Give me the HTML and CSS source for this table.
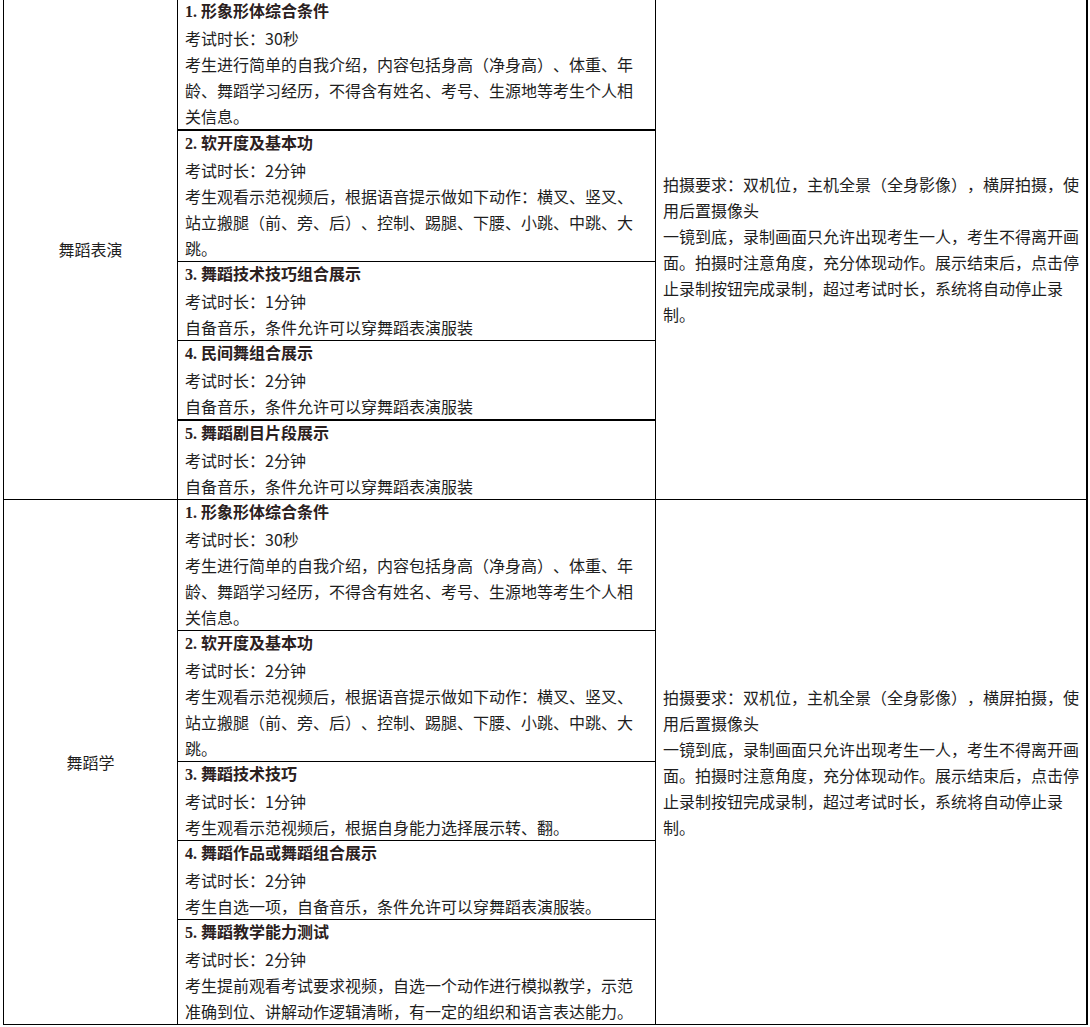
FILE: index.html
```html
<!DOCTYPE html>
<html lang="zh-CN">
<head>
<meta charset="utf-8">
<title>舞蹈考试要求</title>
<link rel="stylesheet" href="styles.css">
</head>
<body>
<table class="exam">
  <colgroup>
    <col class="c-name">
    <col class="c-items">
    <col class="c-req">
  </colgroup>
  <tbody>
    <tr class="first">
      <td class="name">舞蹈表演</td>
      <td class="items">
        <div class="item thick">
          <div class="title">1. 形象形体综合条件</div>
          <div>考试时长：30秒</div>
          <div>考生进行简单的自我介绍，内容包括身高（净身高）、体重、年龄、舞蹈学习经历，不得含有姓名、考号、生源地等考生个人相关信息。</div>
        </div>
        <div class="item">
          <div class="title">2. 软开度及基本功</div>
          <div>考试时长：2分钟</div>
          <div>考生观看示范视频后，根据语音提示做如下动作：横叉、竖叉、站立搬腿（前、旁、后）、控制、踢腿、下腰、小跳、中跳、大跳。</div>
        </div>
        <div class="item">
          <div class="title">3. 舞蹈技术技巧组合展示</div>
          <div>考试时长：1分钟</div>
          <div>自备音乐，条件允许可以穿舞蹈表演服装</div>
        </div>
        <div class="item thick">
          <div class="title">4. 民间舞组合展示</div>
          <div>考试时长：2分钟</div>
          <div>自备音乐，条件允许可以穿舞蹈表演服装</div>
        </div>
        <div class="item last">
          <div class="title">5. 舞蹈剧目片段展示</div>
          <div>考试时长：2分钟</div>
          <div>自备音乐，条件允许可以穿舞蹈表演服装</div>
        </div>
      </td>
      <td class="req">
        <div>拍摄要求：双机位，主机全景（全身影像），横屏拍摄，使用后置摄像头</div>
        <div>一镜到底，录制画面只允许出现考生一人，考生不得离开画面。拍摄时注意角度，充分体现动作。展示结束后，点击停止录制按钮完成录制，超过考试时长，系统将自动停止录制。</div>
      </td>
    </tr>
    <tr>
      <td class="name">舞蹈学</td>
      <td class="items">
        <div class="item">
          <div class="title">1. 形象形体综合条件</div>
          <div>考试时长：30秒</div>
          <div>考生进行简单的自我介绍，内容包括身高（净身高）、体重、年龄、舞蹈学习经历，不得含有姓名、考号、生源地等考生个人相关信息。</div>
        </div>
        <div class="item">
          <div class="title">2. 软开度及基本功</div>
          <div>考试时长：2分钟</div>
          <div>考生观看示范视频后，根据语音提示做如下动作：横叉、竖叉、站立搬腿（前、旁、后）、控制、踢腿、下腰、小跳、中跳、大跳。</div>
        </div>
        <div class="item">
          <div class="title">3. 舞蹈技术技巧</div>
          <div>考试时长：1分钟</div>
          <div>考生观看示范视频后，根据自身能力选择展示转、翻。</div>
        </div>
        <div class="item">
          <div class="title">4. 舞蹈作品或舞蹈组合展示</div>
          <div>考试时长：2分钟</div>
          <div>考生自选一项，自备音乐，条件允许可以穿舞蹈表演服装。</div>
        </div>
        <div class="item last">
          <div class="title">5. 舞蹈教学能力测试</div>
          <div>考试时长：2分钟</div>
          <div>考生提前观看考试要求视频，自选一个动作进行模拟教学，示范准确到位、讲解动作逻辑清晰，有一定的组织和语言表达能力。</div>
        </div>
      </td>
      <td class="req">
        <div>拍摄要求：双机位，主机全景（全身影像），横屏拍摄，使用后置摄像头</div>
        <div>一镜到底，录制画面只允许出现考生一人，考生不得离开画面。拍摄时注意角度，充分体现动作。展示结束后，点击停止录制按钮完成录制，超过考试时长，系统将自动停止录制。</div>
      </td>
    </tr>
  </tbody>
</table>
</body>
</html>
```

FILE: styles.css
```css
html, body {
  margin: 0;
  padding: 0;
  background: #ffffff;
}

body {
  font-family: "Noto Sans CJK SC", "Noto Sans", sans-serif;
  font-size: 16px;
  line-height: 26px;
  color: #1e1e1e;
  text-spacing-trim: space-all;
}

.exam {
  margin-top: -1px;
  margin-left: 3px;
  width: 1083px;
  table-layout: fixed;
  border-collapse: collapse;
}

.c-name { width: 174px; }
.c-items { width: 478px; }
.c-req { width: 431px; }

.exam td {
  border: 1px solid #000000;
  padding: 0;
  vertical-align: middle;
}

.exam tr.first td {
  border-top: none;
}

.exam td.req {
  border-right: 2px solid #000000;
  padding: 0 5px 0 7px;
}

.name {
  text-align: center;
}

.items {
  vertical-align: top;
}

.item {
  padding: 0 7px;
  border-bottom: 1px solid #000000;
}

.item.thick {
  border-bottom-width: 2px;
}

.item.last {
  border-bottom: none;
}

.title {
  font-family: "Liberation Serif", "Noto Sans CJK SC", serif;
  font-weight: bold;
  color: #2a2020;
}
```
